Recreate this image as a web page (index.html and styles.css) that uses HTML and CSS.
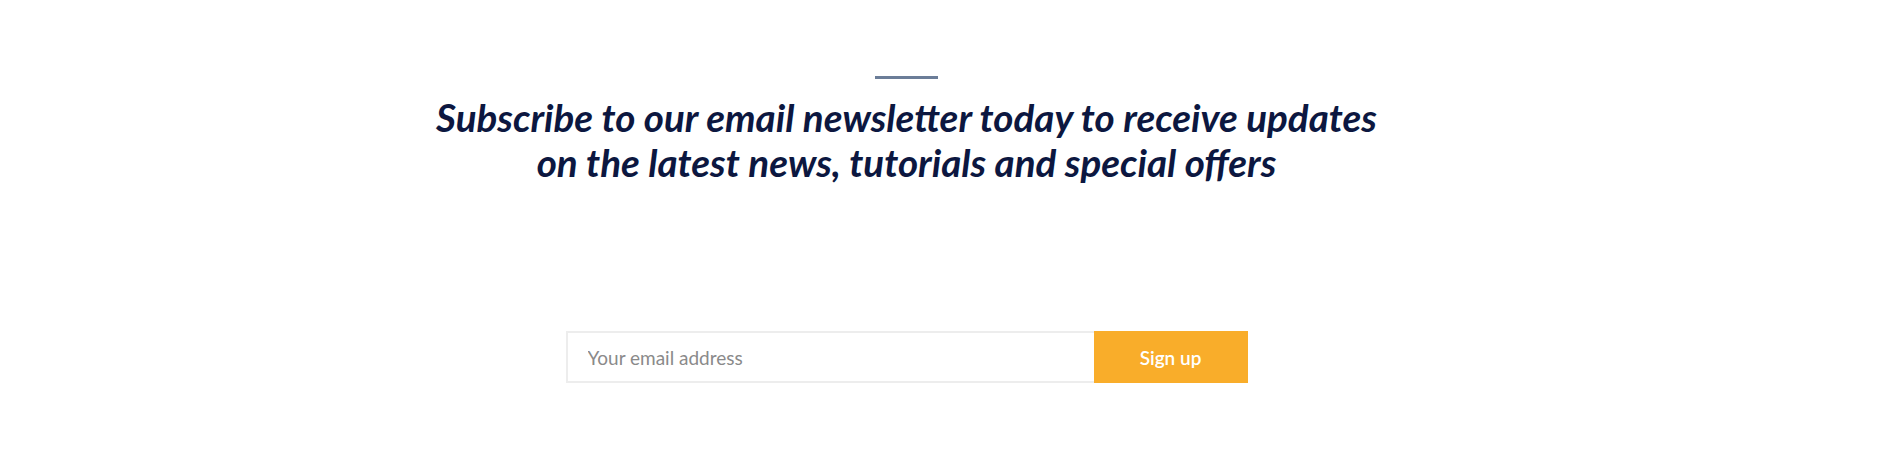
FILE: index.html
```html
<!DOCTYPE html>
<html lang="en">
<head>
<meta charset="utf-8">
<title>Newsletter</title>
<link rel="stylesheet" href="styles.css">
</head>
<body>
<section class="newsletter">
  <div class="divider"></div>
  <h2 class="headline">Subscribe to our email newsletter today to receive updates<br>on the latest news, tutorials and special offers</h2>
  <form class="signup" onsubmit="return false;">
    <input class="email" type="email" placeholder="Your email address">
    <button class="submit" type="submit">Sign up</button>
  </form>
</section>
</body>
</html>
```

FILE: styles.css
```css
html, body {
  margin: 0;
  padding: 0;
  background: #ffffff;
}
body {
  font-family: Lato, "Open Sans", sans-serif;
  width: 1900px;
  height: 469px;
  overflow: hidden;
}
.newsletter {
  width: 1813px;
  display: flex;
  flex-direction: column;
  align-items: center;
  padding-top: 76px;
}
.divider {
  width: 63px;
  height: 3px;
  background: #6b7d98;
}
.headline {
  margin: 16px 0 0;
  font-size: 38.6px;
  line-height: 45px;
  font-weight: 700;
  font-style: italic;
  color: #0c1740;
  text-align: center;
  letter-spacing: 0;
}
.signup {
  display: flex;
  margin-top: 146px;
}
.email {
  box-sizing: border-box;
  width: 528px;
  height: 52px;
  border: 2px solid #ededed;
  border-right: none;
  padding: 0 20px;
  font-family: Lato, sans-serif;
  font-size: 19px;
  color: #333;
  outline: none;
}
.email::placeholder {
  color: #8a8a8a;
}
.submit {
  width: 154px;
  height: 52px;
  border: none;
  background: #f9ad2a;
  color: #ffffff;
  font-family: Lato, sans-serif;
  font-size: 19px;
  font-weight: 600;
  cursor: pointer;
}
```
